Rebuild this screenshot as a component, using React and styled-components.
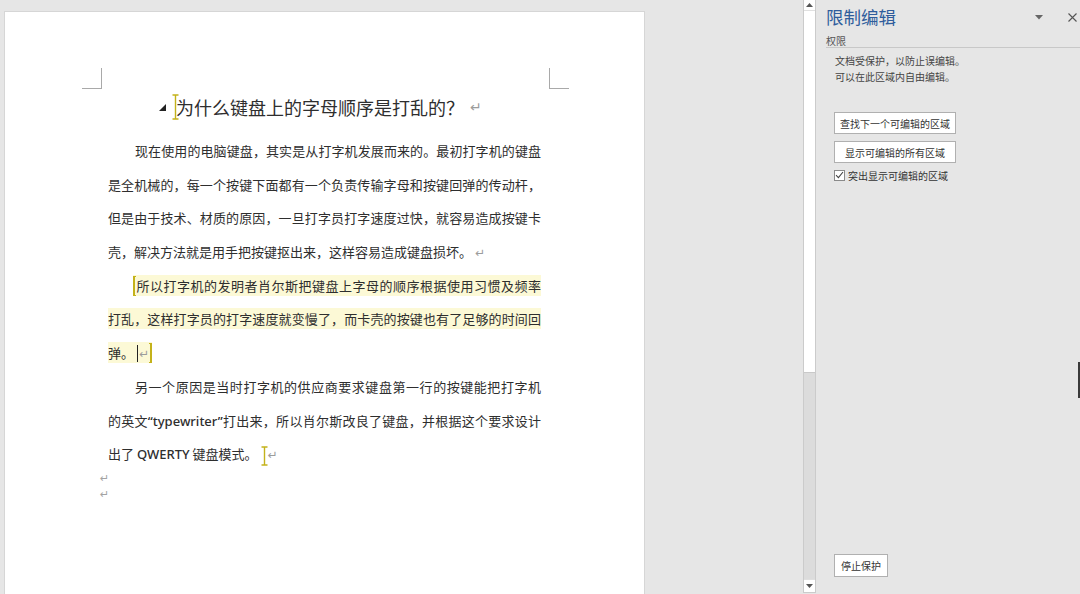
import React from "react";
import styled, { createGlobalStyle } from "styled-components";

const GlobalStyle = createGlobalStyle`
  html, body { margin: 0; padding: 0; background: #e6e6e6; overflow: hidden; }
  body { font-family: "Noto Sans CJK SC", "Noto Sans", sans-serif; }
  * { box-sizing: border-box; }
`;

const Window = styled.div`
  display: flex;
  width: 1080px;
  height: 594px;
  overflow: hidden;
  background: #e6e6e6;
`;

const Canvas = styled.div`
  width: 803px;
  height: 594px;
  padding: 11px 0 0 4px;
  overflow: hidden;
`;

const Page = styled.div`
  width: 641px;
  height: 600px;
  background: #fff;
  border: 1px solid #d6d6d6;
  border-bottom: none;
  padding-top: 56px;
`;

const CornerRow = styled.div`
  margin-left: 77px;
  width: 487px;
  height: 21px;
  display: flex;
  justify-content: space-between;
`;

const Corner = styled.div`
  width: 20px;
  height: 21px;
  border-bottom: 1px solid #a9a9a9;
  ${(p) => (p.$right ? "border-left: 1px solid #a9a9a9;" : "border-right: 1px solid #a9a9a9;")}
`;

const Column = styled.div`
  margin-left: 103px;
  width: 433px;
  color: #2e2e2e;
`;

const Heading = styled.div`
  height: 30px;
  margin: 3px 0 12px;
  padding-left: 51px;
  display: flex;
  align-items: center;
  font-size: 18px;
  color: #2e2e2e;
`;

const Line = styled.div`
  height: 33.7px;
  line-height: 33.7px;
  font-size: 13px;
  text-align: ${(p) => (p.$last ? "left" : "justify")};
  text-align-last: ${(p) => (p.$last ? "left" : "justify")};
  text-indent: ${(p) => (p.$indent ? `${p.$indent}px` : "0")};
`;

const Latin = styled.span`
  font-family: "Noto Sans", sans-serif;
  font-weight: 500;
`;

const Mark = styled.span`
  background: #fcf9d6;
  padding: 1px 0;
`;

const Bracket = styled.span`
  display: inline-block;
  width: 3px;
  height: 20px;
  vertical-align: -5px;
  border-top: 1px solid #c4b21a;
  border-bottom: 1px solid #c4b21a;
  ${(p) => (p.$end ? "border-right: 2px solid #c4b21a;" : "border-left: 2px solid #c4b21a;")}
  text-indent: 0;
`;

const Caret = styled.span`
  display: inline-block;
  width: 1px;
  height: 17px;
  margin-left: 3px;
  vertical-align: -4px;
  background: #222;
`;

const Para = styled.span`
  font-family: "DejaVu Sans", sans-serif;
  font-size: ${(p) => p.$size ?? 12}px;
  color: #9c9c9c;
  margin-left: ${(p) => p.$gap ?? 3}px;
`;

const EmptyMark = styled.div`
  height: 16px;
  line-height: 16px;
  margin-left: -8px;
  font-family: "DejaVu Sans", sans-serif;
  font-size: 11px;
  color: #a3a3a3;
`;

const Scrollbar = styled.div`
  width: 13px;
  height: 593px;
  display: flex;
  flex-direction: column;
  border-left: 1px solid #cbcbcb;
  border-right: 1px solid #cbcbcb;
  border-bottom: 1px solid #cbcbcb;
  background: #dcdcdc;
`;

const ArrowBtn = styled.div`
  height: ${(p) => p.$h}px;
  background: #fff;
  display: flex;
  align-items: center;
  justify-content: center;
  border-${(p) => (p.$down ? "top" : "bottom")}: 1px solid #e0e0e0;
`;

const Thumb = styled.div`
  height: 362px;
  background: #fff;
  border-bottom: 1px solid #c9c9c9;
`;

const Track = styled.div`
  flex: 1;
`;

const Panel = styled.div`
  position: relative;
  width: 264px;
  height: 594px;
  padding: 5px 0 17px 10px;
  display: flex;
  flex-direction: column;
  font-size: 10px;
  color: #444;
`;

const PanelHeader = styled.div`
  height: 24px;
  display: flex;
  align-items: center;
  padding-right: 3px;
`;

const Title = styled.div`
  font-size: 17.5px;
  color: #2f5d9c;
  line-height: 24px;
`;

const HeaderIcons = styled.div`
  margin-left: auto;
  display: flex;
  align-items: center;
  gap: 25px;
`;

const Section = styled.div`
  margin-top: 5px;
  height: 14px;
  line-height: 13px;
  border-bottom: 1px solid #c8c8c8;
  color: #555;
`;

const Desc = styled.div`
  margin: 5px 0 0 9px;
  line-height: 16px;
`;

const Button = styled.div`
  width: ${(p) => p.$w}px;
  height: ${(p) => p.$h || 22}px;
  margin: ${(p) => p.$mt}px 0 0 8px;
  border: 1px solid #b0b0b0;
  background: #fff;
  display: flex;
  align-items: center;
  justify-content: center;
  color: #333;
`;

const CheckRow = styled.div`
  margin: 6px 0 0 8px;
  height: 12px;
  display: flex;
  align-items: center;
  gap: 3px;
  color: #333;
`;

const Box = styled.div`
  width: 11px;
  height: 11px;
  border: 1px solid #8a8a8a;
  background: #fff;
  display: flex;
  align-items: center;
  justify-content: center;
`;

const Spacer = styled.div`
  flex: 1;
`;

const EdgeBar = styled.div`
  position: absolute;
  right: 0;
  top: 362px;
  width: 2px;
  height: 36px;
  background: #3a3a3a;
`;

const IBeam = ({ h = 26 }) => (
  <svg width="7" height={h} viewBox={`0 0 7 ${h}`} style={{ flexShrink: 0, verticalAlign: "middle" }}>
    <path d={`M0.5 1H6.5M3.5 1V${h - 1}M0.5 ${h - 1}H6.5`} stroke="#c4b21a" strokeWidth="1.4" fill="none" />
  </svg>
);

export default function App() {
  return (
    <>
      <GlobalStyle />
      <Window>
        <Canvas>
          <Page>
            <CornerRow>
              <Corner />
              <Corner $right />
            </CornerRow>
            <Column>
              <Heading>
                <svg width="7" height="7" viewBox="0 0 7 7" style={{ marginRight: 6 }}>
                  <polygon points="7,0 7,7 0,7" fill="#222" />
                </svg>
                <span style={{ marginRight: -3, display: "flex" }}>
                  <IBeam h={26} />
                </span>
                <span>为什么键盘上的字母顺序是打乱的？</span>
                <Para $gap={6} $size={14}>↵</Para>
              </Heading>

              <Line $indent={27}>现在使用的电脑键盘，其实是从打字机发展而来的。最初打字机的键盘</Line>
              <Line>是全机械的，每一个按键下面都有一个负责传输字母和按键回弹的传动杆，</Line>
              <Line>但是由于技术、材质的原因，一旦打字员打字速度过快，就容易造成按键卡</Line>
              <Line $last>
                壳，解决方法就是用手把按键抠出来，这样容易造成键盘损坏。<Para>↵</Para>
              </Line>

              <Line $indent={25}>
                <Mark>
                  <Bracket />所以打字机的发明者肖尔斯把键盘上字母的顺序根据使用习惯及频率
                </Mark>
              </Line>
              <Line>
                <Mark>打乱，这样打字员的打字速度就变慢了，而卡壳的按键也有了足够的时间回</Mark>
              </Line>
              <Line $last>
                <Mark>
                  弹。<Caret />
                  <Para $gap={1}>↵</Para>
                  <Bracket $end />
                </Mark>
              </Line>

              <Line $indent={27}>另一个原因是当时打字机的供应商要求键盘第一行的按键能把打字机</Line>
              <Line>
                的英文<Latin>“typewriter”</Latin>打出来，所以肖尔斯改良了键盘，并根据这个要求设计
              </Line>
              <Line $last>
                出了 <Latin>QWERTY</Latin> 键盘模式。
                <span style={{ marginLeft: 3 }}>
                  <IBeam h={20} />
                </span>
                <Para $gap={0}>↵</Para>
              </Line>
              <EmptyMark>↵</EmptyMark>
              <EmptyMark>↵</EmptyMark>
            </Column>
          </Page>
        </Canvas>

        <Scrollbar>
          <ArrowBtn $h={11}>
            <svg width="7" height="4" viewBox="0 0 7 4">
              <polygon points="0,4 3.5,0 7,4" fill="#555" />
            </svg>
          </ArrowBtn>
          <Thumb />
          <Track />
          <ArrowBtn $h={13} $down>
            <svg width="7" height="4" viewBox="0 0 7 4">
              <polygon points="0,0 7,0 3.5,4" fill="#555" />
            </svg>
          </ArrowBtn>
        </Scrollbar>

        <Panel>
          <PanelHeader>
            <Title>限制编辑</Title>
            <HeaderIcons>
              <svg width="8" height="5" viewBox="0 0 8 5">
                <polygon points="0,0 8,0 4,4.5" fill="#666" />
              </svg>
              <svg width="9" height="9" viewBox="0 0 9 9">
                <path d="M0.5 0.5L8.5 8.5M8.5 0.5L0.5 8.5" stroke="#555" strokeWidth="1.1" />
              </svg>
            </HeaderIcons>
          </PanelHeader>
          <Section>权限</Section>
          <Desc>
            文档受保护，以防止误编辑。
            <br />
            可以在此区域内自由编辑。
          </Desc>
          <Button $w={122} $mt={27}>查找下一个可编辑的区域</Button>
          <Button $w={122} $mt={7}>显示可编辑的所有区域</Button>
          <CheckRow>
            <Box>
              <svg width="9" height="8" viewBox="0 0 9 8">
                <path d="M1 4.2L3.4 6.6L8 1" stroke="#444" strokeWidth="1.1" fill="none" />
              </svg>
            </Box>
            突出显示可编辑的区域
          </CheckRow>
          <Spacer />
          <Button $w={54} $h={23} $mt={0}>停止保护</Button>
          <EdgeBar />
        </Panel>
      </Window>
    </>
  );
}
